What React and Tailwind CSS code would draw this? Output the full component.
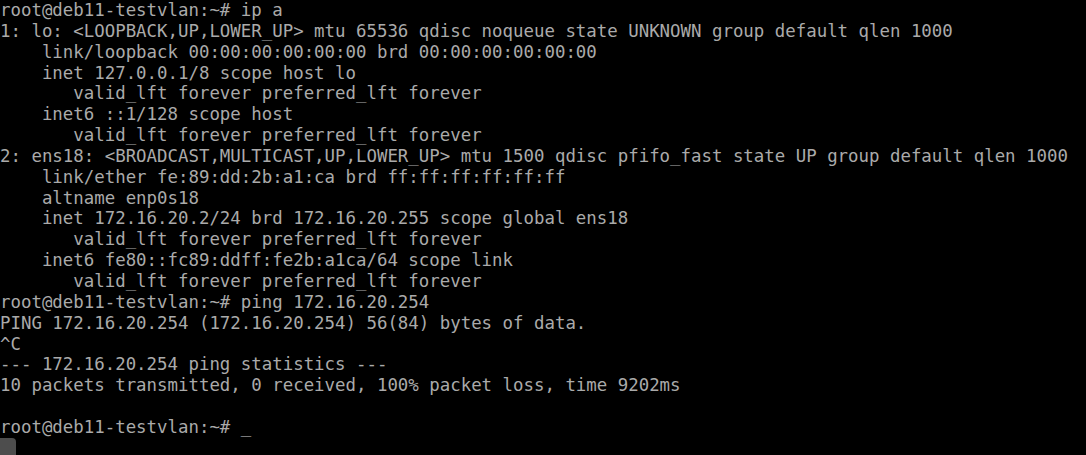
import React from 'react';

const lines = [
  'root@deb11-testvlan:~# ip a',
  '1: lo: <LOOPBACK,UP,LOWER_UP> mtu 65536 qdisc noqueue state UNKNOWN group default qlen 1000',
  '    link/loopback 00:00:00:00:00:00 brd 00:00:00:00:00:00',
  '    inet 127.0.0.1/8 scope host lo',
  '       valid_lft forever preferred_lft forever',
  '    inet6 ::1/128 scope host',
  '       valid_lft forever preferred_lft forever',
  '2: ens18: <BROADCAST,MULTICAST,UP,LOWER_UP> mtu 1500 qdisc pfifo_fast state UP group default qlen 1000',
  '    link/ether fe:89:dd:2b:a1:ca brd ff:ff:ff:ff:ff:ff',
  '    altname enp0s18',
  '    inet 172.16.20.2/24 brd 172.16.20.255 scope global ens18',
  '       valid_lft forever preferred_lft forever',
  '    inet6 fe80::fc89:ddff:fe2b:a1ca/64 scope link',
  '       valid_lft forever preferred_lft forever',
  'root@deb11-testvlan:~# ping 172.16.20.254',
  'PING 172.16.20.254 (172.16.20.254) 56(84) bytes of data.',
  '^C',
  '--- 172.16.20.254 ping statistics ---',
  '10 packets transmitted, 0 received, 100% packet loss, time 9202ms',
  '',
];

export default function App() {
  return (
    <div className="relative w-[1086px] h-[455px] bg-black overflow-hidden">
      {/* console output */}
      <pre className="pt-[0px] pl-[0px] text-[#aaaaaa] text-[17.4px] leading-[20.85px] font-['DejaVu_Sans_Mono',monospace] whitespace-pre">
        {lines.map((l, i) => (
          <div key={i} className="h-[20.85px]">{l}</div>
        ))}
        <div className="h-[20.85px]">
          root@deb11-testvlan:~# <span className="text-[#cccccc]">_</span>
        </div>
      </pre>
      {/* noVNC control handle */}
      <div className="absolute left-0 bottom-0 w-[16px] h-[17px] bg-[#4d4d4d] rounded-tr-[4px]" />
    </div>
  );
}
